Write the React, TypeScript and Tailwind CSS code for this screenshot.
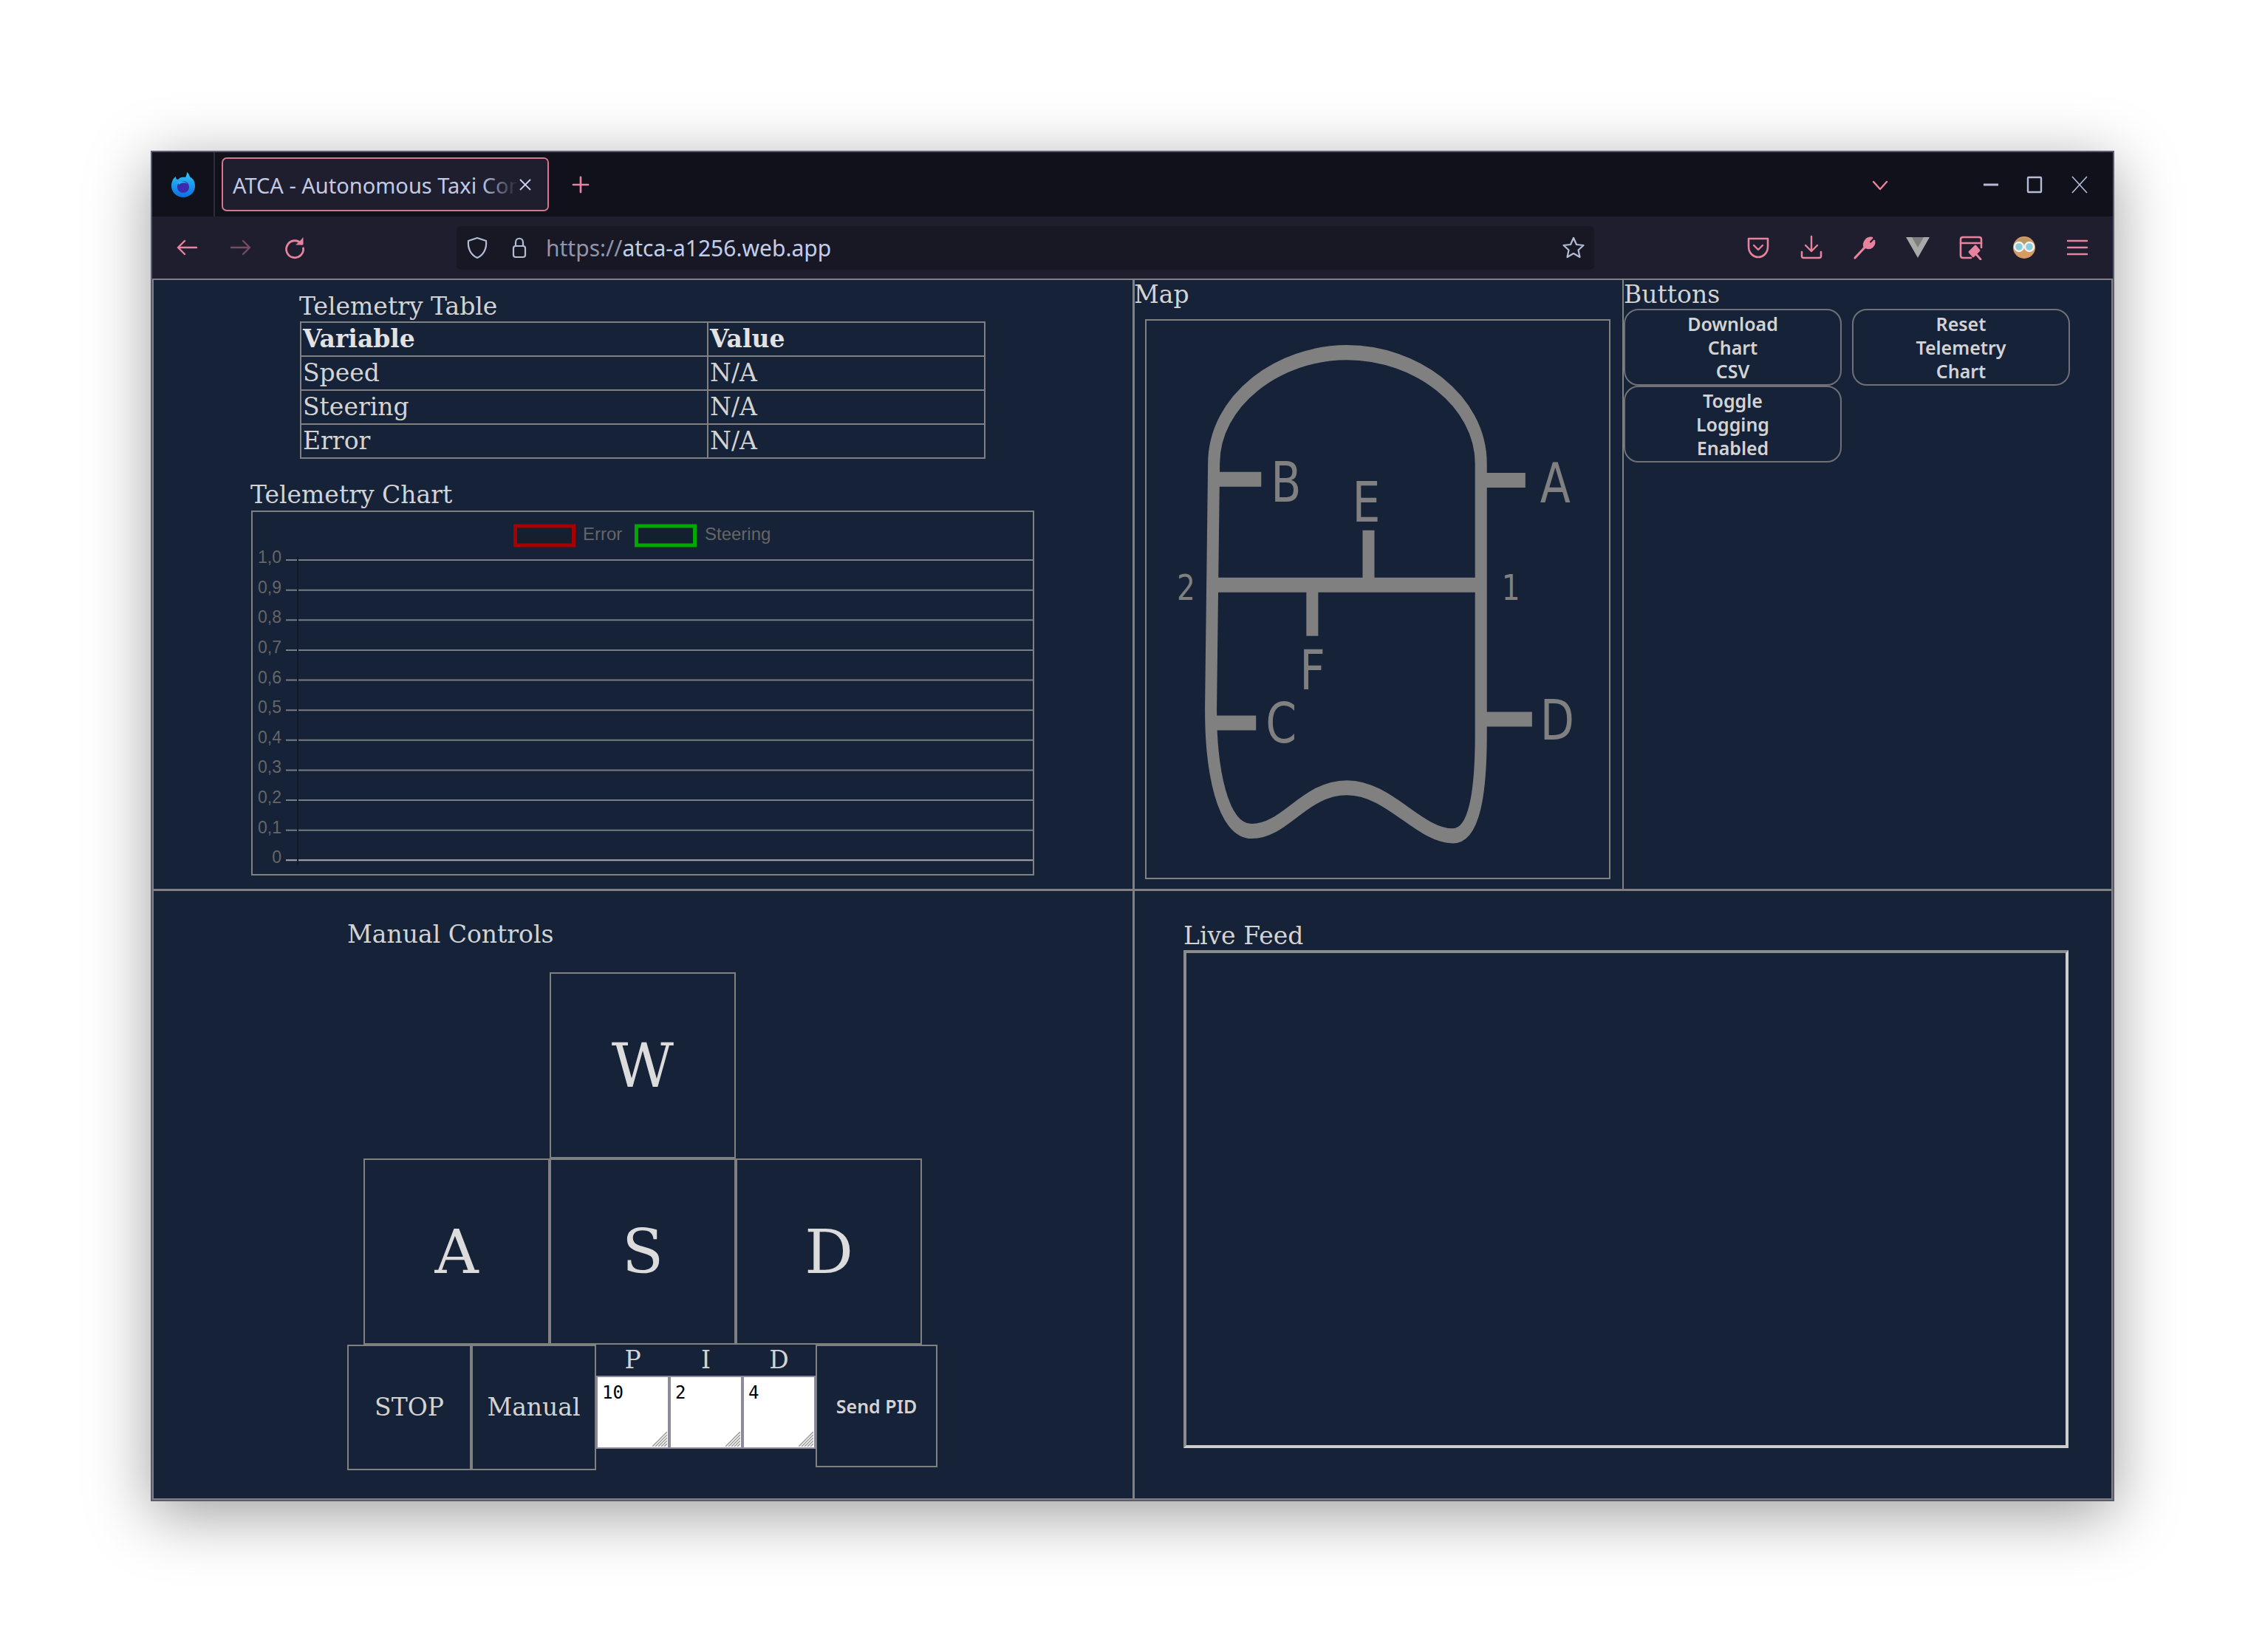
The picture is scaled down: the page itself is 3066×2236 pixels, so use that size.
const ticks = ["1,0", "0,9", "0,8", "0,7", "0,6", "0,5", "0,4", "0,3", "0,2", "0,1", "0"];
const rows = ["Speed", "Steering", "Error"];
const headingClass = "h-[38px] text-[33px] leading-[38px]";
const keyClass = "flex h-[252px] w-[252px] items-center justify-center border-2 border-[#808080] text-[82px] text-[#dcdcdc]";
const sans = "font-['Noto_Sans',sans-serif]";
const uiButton = `h-[104px] w-[295px] rounded-[20px] border-2 border-[#6f7177] ${sans} text-[25px] font-semibold leading-[32px] text-[#d3d3d3]`;

function FirefoxLogo() {
  return (
    <svg width="34" height="36" viewBox="0 0 34 36">
      <defs>
        <linearGradient id="fx" x1="0" y1="0" x2="0" y2="1">
          <stop offset="0" stopColor="#2fc6f6" />
          <stop offset="1" stopColor="#0a6fe0" />
        </linearGradient>
      </defs>
      <path
        d="M2 14 C3 10 5 8 7 7 C7 10 8 11 10 11 C12 8 16 7 20 8 C21 6 22 4 22 1 C26 4 25 7 27 8 C32 11 33 16 33 20 C33 28 26 35 17 35 C8 35 1 28 1 20 C1 18 1 16 2 14 Z"
        fill="url(#fx)"
      />
      <circle cx="17" cy="21" r="8" fill="#3a2bb0" />
      <path d="M9 15 C13 12 20 13 23 17 C19 15 14 15 12 18 Z" fill="#1fb4f0" />
    </svg>
  );
}

function Pink({ children, size = 34, faded = false }: { children: React.ReactNode; size?: number; faded?: boolean }) {
  return (
    <svg
      width={size}
      height={size}
      viewBox="0 0 34 34"
      fill="none"
      stroke="#e8839f"
      strokeWidth="2.4"
      strokeLinecap="round"
      strokeLinejoin="round"
      opacity={faded ? 0.45 : 1}
    >
      {children}
    </svg>
  );
}

function Slate({ children }: { children: React.ReactNode }) {
  return (
    <svg width="34" height="34" viewBox="0 0 34 34" fill="none" stroke="#b4bcd6" strokeWidth="2.2" strokeLinecap="round" strokeLinejoin="round">
      {children}
    </svg>
  );
}

function TabBar() {
  return (
    <div className="flex h-[87px] items-center bg-[#11111b]">
      <div className="flex h-full w-[85px] items-center justify-center border-r-2 border-[#2c2c3c]">
        <FirefoxLogo />
      </div>
      <div className="relative ml-[9px] flex h-[73px] w-[443px] items-center overflow-hidden rounded-[7px] border-2 border-[#d9758f] bg-[#1e1e2e] pt-[2px] pl-[13px] font-['Noto_Sans',sans-serif] text-[29px] whitespace-nowrap text-[#c3cae4]">
        ATCA - Autonomous Taxi Control
        <div className="absolute top-0 right-[40px] h-full w-[50px] bg-linear-to-r from-transparent to-[#1e1e2e]" />
        <div className="absolute top-0 right-0 flex h-full w-[40px] items-center bg-[#1e1e2e]">
          <svg width="20" height="20" viewBox="0 0 20 20" stroke="#cdd6f4" strokeWidth="1.8">
            <path d="M3 3 L17 17 M17 3 L3 17" />
          </svg>
        </div>
      </div>
      <div className="ml-[24px]">
        <Pink size={38}>
          <path d="M17 8 V26 M8 17 H26" />
        </Pink>
      </div>
      <div className="ml-auto flex items-center pr-[27px]">
        <Pink>
          <path d="M8 13 L17 23 L26 13" />
        </Pink>
        <svg className="ml-[115px]" width="36" height="36" viewBox="0 0 36 36" fill="none" stroke="#b4bcd6" strokeWidth="2.4">
          <path d="M8 18 H28" strokeWidth="3" />
        </svg>
        <svg className="ml-[23px]" width="36" height="36" viewBox="0 0 36 36" fill="none" stroke="#b4bcd6" strokeWidth="2.4">
          <rect x="9" y="8" width="18" height="20" rx="1" />
        </svg>
        <svg className="ml-[25px]" width="36" height="36" viewBox="0 0 36 36" fill="none" stroke="#b4bcd6" strokeWidth="1.6">
          <path d="M8 7 L28 29 M28 7 L8 29" />
        </svg>
      </div>
    </div>
  );
}

function Toolbar() {
  return (
    <div className="flex h-[84px] items-center bg-[#1e1e2e]">
      <div className="ml-[30px] flex items-center gap-[39px]">
        <Pink>
          <path d="M30 17 H5 M14 8 L5 17 L14 26" />
        </Pink>
        <Pink faded>
          <path d="M4 17 H29 M20 8 L29 17 L20 26" />
        </Pink>
        <Pink>
          <path d="M26 12 A11.5 11.5 0 1 0 28.5 18" strokeWidth="2.8" />
          <path d="M28 4 V13 H19" fill="#e8839f" strokeWidth="1" />
        </Pink>
      </div>
      <div className="ml-[202px] flex h-[59px] w-[1540px] items-center rounded-[6px] bg-[#181825]">
        <div className="ml-[11px]">
          <Slate>
            <path d="M17 4 L29 8 C30 18 26 27 17 31 C8 27 4 18 5 8 Z" />
          </Slate>
        </div>
        <div className="ml-[23px]">
          <Slate>
            <rect x="9" y="15" width="16" height="15" rx="3" />
            <path d="M12 15 V10 C12 3 22 3 22 10 V15" />
          </Slate>
        </div>
        <div className="ml-[19px] font-['Noto_Sans',sans-serif] text-[30px] whitespace-nowrap text-[#8f95ad]">
          https://<span className="text-[#c3cde8]">atca-a1256.web.app</span>
        </div>
        <div className="mr-[11px] ml-auto">
          <Slate>
            <path d="M17 4 L21 13 L30.5 14 L23.5 20.5 L25.5 30 L17 25 L8.5 30 L10.5 20.5 L3.5 14 L13 13 Z" />
          </Slate>
        </div>
      </div>
      <div className="ml-[205px] flex items-center gap-[38px]">
        <Pink>
          <path d="M4 5 H30 V16 C30 24 24 30 17 30 C10 30 4 24 4 16 Z" strokeWidth="2.6" />
          <path d="M11 14 L17 20 L23 14" />
        </Pink>
        <Pink>
          <path d="M17 2 V22 M9 14 L17 22 L25 14" />
          <path d="M4 23 V29 C4 30 5 31 6 31 H28 C29 31 30 30 30 29 V23" strokeWidth="2.6" />
        </Pink>
        <Pink>
          <path d="M4 31 L18 16" strokeWidth="3.2" />
          <path d="M17 17 C14 10 20 3 27 4 L22 9 L25 13 L30 8 C31 15 25 20 19 17" strokeWidth="2.6" fill="#e8839f" />
        </Pink>
        <svg width="34" height="30" viewBox="0 0 34 30">
          <path d="M1 1 H33 L17 29 Z" fill="#a9a9a9" />
          <path d="M9 1 H25 L17 15 Z" fill="#7e7e7e" />
        </svg>
        <Pink>
          <path d="M17 31 H6 C4 31 3 30 3 28 V6 C3 4 4 3 6 3 H28 C30 3 31 4 31 6 V17" strokeWidth="2.6" />
          <path d="M3 11 H31" strokeWidth="2.6" />
          <path d="M15 23 L23 15 L28 21 L20 29 Z M23 25 L30 33" strokeWidth="2.8" fill="#e8839f" />
        </Pink>
        <svg width="34" height="34" viewBox="0 0 34 34">
          <circle cx="17" cy="17" r="15" fill="#d79a62" />
          <path d="M4 12 C8 2 26 2 30 12 Z" fill="#b99a66" />
          <circle cx="10" cy="16" r="6" fill="#8ccbd8" stroke="#f0f3f5" strokeWidth="2.4" />
          <circle cx="24" cy="16" r="6" fill="#8ccbd8" stroke="#f0f3f5" strokeWidth="2.4" />
        </svg>
        <Pink>
          <path d="M4 8 H30 M4 17 H30 M4 26 H30" />
        </Pink>
      </div>
    </div>
  );
}

function TelemetryChart() {
  return (
    <div className="ml-[132px] h-[494px] w-[1060px] border-2 border-[#808080]">
      <svg className="block h-full w-full" viewBox="-1 0 1056 490">
        <g fontFamily="'Liberation Sans', sans-serif">
          <rect x="354.5" y="19" width="79" height="26" fill="#14202f" stroke="#a80000" strokeWidth="5" />
          <text x="446" y="38" fontSize="24" fill="#666">Error</text>
          <rect x="518.5" y="19" width="79" height="26" fill="#14202f" stroke="#00a800" strokeWidth="5" />
          <text x="611" y="38" fontSize="24" fill="#666">Steering</text>
          <path d="M60 60 V478" stroke="#111a2a" strokeWidth="2" />
          {ticks.map((label, i) => {
            const y = 65 + 40.63 * i;
            const color = label === "0" ? "#a8a8a8" : "#7a7d84";
            return (
              <g key={label}>
                <path d={`M44 ${y} H59 M61 ${y} H1055`} stroke={color} strokeWidth="2" />
                <text x="38" y={y + 4} textAnchor="end" fontSize="23" fill="#666">
                  {label}
                </text>
              </g>
            );
          })}
        </g>
      </svg>
    </div>
  );
}

function MapDrawing() {
  const outline =
    "M93 156 C93 88 180 36 273 36 C366 36 454 88 454 156 L454 448 C454 512 445 558 416 558 C370 558 330 506 273 506 C215 506 190 553 144 553 C105 553 88 488 89 416 Z";
  return (
    <svg className="block h-full w-full" viewBox="2 1.6 625 601.6" preserveAspectRatio="none">
      <g stroke="#808080" strokeWidth="16" fill="none">
        <path d={outline} />
        <path d="M93 173 H157 M456 174 H514 M456 432 H523 M92 436 H150 M92 287 H454 M302 228 V287 M226 287 V342" />
      </g>
      <g fontFamily="'DejaVu Sans', sans-serif" fontSize="60" fill="#808080">
        <text x="170" y="197">B</text>
        <text x="534" y="198">A</text>
        <text x="280" y="219">E</text>
        <text x="209" y="400">F</text>
        <text x="163" y="457">C</text>
        <text x="534" y="454">D</text>
        <text x="43" y="303" fontSize="39">2</text>
        <text x="482" y="303" fontSize="39">1</text>
      </g>
    </svg>
  );
}

function PidInput({ value }: { value: string }) {
  return (
    <div className="relative h-[99px] w-[99px]">
      <textarea
        readOnly
        defaultValue={value}
        className="block h-full w-full resize-none border-2 border-[#8b8b9b] bg-white px-[6px] pt-[8px] font-['DejaVu_Sans_Mono',monospace] text-[24px] leading-[26px] text-black"
      />
      <svg className="absolute right-[3px] bottom-[3px]" width="20" height="20" viewBox="0 0 20 20" stroke="#9a9a9a" strokeWidth="1.5">
        <path d="M0 20 L20 0 M4 20 L20 4 M8 20 L20 8 M12 20 L20 12 M16 20 L20 16" />
      </svg>
    </div>
  );
}

export default function App() {
  return (
    <div className="min-h-screen bg-white pt-[204px] pl-[204px] font-['DejaVu_Serif',serif] text-[#d3d3d3]">
      <div className="flex h-[1828px] w-[2658px] flex-col border-2 border-[#5b5c70] shadow-[0_18px_80px_rgba(0,0,0,0.38)]">
        <TabBar />
        <Toolbar />
        <div className="flex flex-1 flex-col border-2 border-[#808080] bg-[#152238]">
          <div className="flex h-[827px] border-b-[3px] border-[#808080]">
            <section className="w-[1328px] border-r-[3px] border-[#808080] pt-[17px]">
              <h2 className={`ml-[197px] ${headingClass}`}>Telemetry Table</h2>
              <table className="mt-[1px] ml-[198px] w-[928px] table-fixed border-collapse border-2 border-[#808080] text-[33px] leading-[38px]">
                <colgroup>
                  <col className="w-[551px]" />
                  <col />
                </colgroup>
                <thead>
                  <tr className="h-[46px]">
                    <th className="border-2 border-[#808080] px-[2px] py-0 text-left font-bold text-[#e2e2e2]">Variable</th>
                    <th className="border-2 border-[#808080] px-[2px] py-0 text-left font-bold text-[#e2e2e2]">Value</th>
                  </tr>
                </thead>
                <tbody>
                  {rows.map((name) => (
                    <tr key={name} className="h-[46px]">
                      <td className="border-2 border-[#808080] px-[2px] py-0">{name}</td>
                      <td className="border-2 border-[#808080] px-[2px] py-0">N/A</td>
                    </tr>
                  ))}
                </tbody>
              </table>
              <h2 className={`mt-[30px] ml-[131px] ${headingClass}`}>Telemetry Chart</h2>
              <div className="mt-[2px]">
                <TelemetryChart />
              </div>
            </section>
            <section className="w-[662px] border-r-2 border-[#808080] pt-[1px]">
              <h2 className={`-ml-[1px] ${headingClass}`}>Map</h2>
              <div className="mt-[14px] ml-[14px] h-[758px] w-[630px] border-2 border-[#808080]">
                <MapDrawing />
              </div>
            </section>
            <section className="flex-1 pt-[1px]">
              <h2 className={headingClass}>Buttons</h2>
              <div className="grid w-[605px] grid-cols-[295px_295px] gap-x-[14px]">
                <button className={uiButton}>
                  Download
                  <br />
                  Chart
                  <br />
                  CSV
                </button>
                <button className={uiButton}>
                  Reset
                  <br />
                  Telemetry
                  <br />
                  Chart
                </button>
                <button className={uiButton}>
                  Toggle
                  <br />
                  Logging
                  <br />
                  Enabled
                </button>
              </div>
            </section>
          </div>
          <div className="flex flex-1">
            <section className="w-[1328px] border-r-[3px] border-[#808080] pt-[40px]">
              <h2 className={`ml-[262px] ${headingClass}`}>Manual Controls</h2>
              <div className={`mt-[32px] ml-[536px] ${keyClass}`}>W</div>
              <div className="ml-[284px] flex">
                <div className={keyClass}>A</div>
                <div className={keyClass}>S</div>
                <div className={keyClass}>D</div>
              </div>
              <div className="ml-[262px] flex items-start text-[33px]">
                <button className="h-[170px] w-[168px] border-2 border-[#808080]">STOP</button>
                <button className="h-[170px] w-[169px] border-2 border-[#808080]">Manual</button>
                <div className="w-[297px]">
                  <div className="grid h-[42px] grid-cols-3 text-center leading-[42px]">
                    <span>P</span>
                    <span>I</span>
                    <span>D</span>
                  </div>
                  <div className="flex">
                    {["10", "2", "4"].map((value) => (
                      <PidInput key={value} value={value} />
                    ))}
                  </div>
                </div>
                <button className={`h-[166px] w-[165px] border-2 border-[#808080] pt-[2px] ${sans} text-[25px] font-semibold`}>Send PID</button>
              </div>
            </section>
            <section className="flex-1 pt-[42px]">
              <h2 className={`ml-[66px] ${headingClass}`}>Live Feed</h2>
              <div className="ml-[66px] h-[674px] w-[1198px] border-4 border-t-[#8c8c8c] border-r-[#cdcdcd] border-b-[#cdcdcd] border-l-[#8c8c8c]" />
            </section>
          </div>
        </div>
      </div>
    </div>
  );
}
